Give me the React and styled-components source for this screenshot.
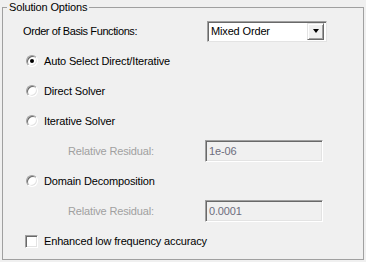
import React from 'react';
import styled, { createGlobalStyle } from 'styled-components';

const GlobalStyle = createGlobalStyle`
  html, body { margin: 0; padding: 0; background: #f0f0f0; }
  body {
    font-family: "Liberation Sans", Arial, sans-serif;
    font-size: 11px;
    letter-spacing: -0.15px;
    color: #000;
  }
`;

const Page = styled.div`
  width: 366px;
  height: 262px;
  box-sizing: border-box;
  padding: 0 2px 2px 2px;
`;

const Group = styled.fieldset`
  margin: 0;
  padding: 7px 0 0 0;
  height: 100%;
  box-sizing: border-box;
  border: 1px solid #a0a0a0;
  min-width: 0;
  display: flex;
  flex-direction: column;
  gap: 10px;
`;

const Legend = styled.legend`
  margin-left: 4px;
  padding: 0 2px;
  line-height: 14px;
`;

const Row = styled.div`
  height: 20px;
  display: flex;
  align-items: center;
  padding-left: ${p => p.$indent}px;
`;

const Label = styled.span`
  width: ${p => p.$width}px;
  color: ${p => (p.$disabled ? '#a0a0a0' : '#000')};
  letter-spacing: ${p => (p.$tight ? '-0.4px' : 'inherit')};
  flex-shrink: 0;
`;

const Combo = styled.div`
  width: 120px;
  height: 21px;
  box-sizing: border-box;
  background: #fff;
  border: 1px solid;
  border-color: #a0a0a0 #e3e3e3 #e3e3e3 #a0a0a0;
  box-shadow: inset 1px 1px #696969, inset -1px -1px #fff;
  display: flex;
  align-items: center;
  justify-content: space-between;
  padding: 0 2px 0 3px;
`;

const ComboText = styled.span`
  color: #000;
`;

const ComboButton = styled.span`
  width: 17px;
  height: 17px;
  box-sizing: border-box;
  background: #f0f0f0;
  border: 1px solid;
  border-color: #e3e3e3 #696969 #696969 #e3e3e3;
  box-shadow: inset 1px 1px #fff, inset -1px -1px #a0a0a0;
  display: flex;
  align-items: center;
  justify-content: center;
  &::after {
    content: '';
    border-left: 3.5px solid transparent;
    border-right: 3.5px solid transparent;
    border-top: 4px solid #000;
  }
`;

const Radio = styled.span`
  width: 12px;
  height: 12px;
  box-sizing: border-box;
  border-radius: 50%;
  background: #fff;
  border: 1px solid;
  border-color: #a0a0a0 #fff #fff #a0a0a0;
  box-shadow: inset 1px 1px #696969, inset -1px -1px #e3e3e3;
  display: flex;
  align-items: center;
  justify-content: center;
  margin-right: 6px;
  flex-shrink: 0;
  &::after {
    content: '';
    width: 4px;
    height: 4px;
    border-radius: 50%;
    background: ${p => (p.$checked ? '#000' : 'transparent')};
  }
`;

const Check = styled.span`
  width: 13px;
  height: 13px;
  box-sizing: border-box;
  background: #fff;
  border: 1px solid;
  border-color: #a0a0a0 #fff #fff #a0a0a0;
  box-shadow: inset 1px 1px #696969, inset -1px -1px #e3e3e3;
  margin-right: 6px;
  flex-shrink: 0;
`;

const TextBox = styled.div`
  width: 118px;
  height: 22px;
  box-sizing: border-box;
  background: #f0f0f0;
  border: 1px solid;
  border-color: #a0a0a0 #fff #fff #a0a0a0;
  box-shadow: inset 1px 1px #696969, inset -1px -1px #e3e3e3;
  color: #6d6d7d;
  display: flex;
  align-items: center;
  padding-left: 3px;
`;

const RadioOption = ({ checked, children }) => (
  <Row $indent={23}>
    <Radio $checked={checked} />
    <span>{children}</span>
  </Row>
);

const Residual = ({ value }) => (
  <Row $indent={65}>
    <Label $width={137} $disabled>Relative Residual:</Label>
    <TextBox>{value}</TextBox>
  </Row>
);

export default function App() {
  return (
    <Page>
      <GlobalStyle />
      <Group>
        <Legend>Solution Options</Legend>
        <Row $indent={20}>
          <Label $width={184} $tight>Order of Basis Functions:</Label>
          <Combo>
            <ComboText>Mixed Order</ComboText>
            <ComboButton />
          </Combo>
        </Row>
        <RadioOption checked>Auto Select Direct/Iterative</RadioOption>
        <RadioOption>Direct Solver</RadioOption>
        <RadioOption>Iterative Solver</RadioOption>
        <Residual value="1e-06" />
        <RadioOption>Domain Decomposition</RadioOption>
        <Residual value="0.0001" />
        <Row $indent={22}>
          <Check />
          <span>Enhanced low frequency accuracy</span>
        </Row>
      </Group>
    </Page>
  );
}
